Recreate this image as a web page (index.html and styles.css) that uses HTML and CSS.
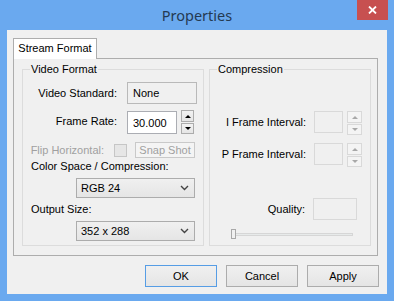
FILE: index.html
```html
<!DOCTYPE html>
<html lang="en">
<head>
    <meta charset="UTF-8">
    <title>Properties</title>
    <link rel="stylesheet" href="styles.css">
</head>
<body>
    <div class="window">
        <div class="titlebar">
            <span></span>
            <span class="title">Properties</span>
            <button class="close" type="button">
                <svg width="9" height="8" viewBox="0 0 9 8"><path d="M1 0.5L8 7.5M8 0.5L1 7.5" stroke="#fff" stroke-width="1.8"/></svg>
            </button>
        </div>
        <div class="client">
            <div class="tabs">
                <div class="tab active">Stream Format</div>
            </div>
            <div class="page">
                <!-- Video Format -->
                <fieldset class="group video">
                    <legend>Video Format</legend>
                    <div class="row std">
                        <label>Video Standard:</label>
                        <div class="field readonly">None</div>
                    </div>
                    <div class="row rate">
                        <label>Frame Rate:</label>
                        <input class="field" type="text" value="30.000">
                        <div class="spin">
                            <span class="spin-btn up"></span>
                            <span class="spin-btn down"></span>
                        </div>
                    </div>
                    <div class="row flip disabled">
                        <label>Flip Horizontal:</label>
                        <span class="check"></span>
                        <button class="btn snap" type="button" disabled>Snap Shot</button>
                    </div>
                    <div class="caption">Color Space / Compression:</div>
                    <div class="select">
                        <span>RGB 24</span>
                        <svg width="9" height="6" viewBox="0 0 9 6"><path d="M1 1L4.5 4.5L8 1" stroke="#444" stroke-width="1.4" fill="none"/></svg>
                    </div>
                    <div class="caption">Output Size:</div>
                    <div class="select">
                        <span>352 x 288</span>
                        <svg width="9" height="6" viewBox="0 0 9 6"><path d="M1 1L4.5 4.5L8 1" stroke="#444" stroke-width="1.4" fill="none"/></svg>
                    </div>
                </fieldset>

                <!-- Compression -->
                <fieldset class="group comp">
                    <legend>Compression</legend>
                    <div class="row iframe">
                        <label>I Frame Interval:</label>
                        <div class="field off"></div>
                        <div class="spin off">
                            <span class="spin-btn up"></span>
                            <span class="spin-btn down"></span>
                        </div>
                    </div>
                    <div class="row pframe">
                        <label>P Frame Interval:</label>
                        <div class="field off"></div>
                        <div class="spin off">
                            <span class="spin-btn up"></span>
                            <span class="spin-btn down"></span>
                        </div>
                    </div>
                    <div class="row quality">
                        <label>Quality:</label>
                        <div class="field off wide"></div>
                    </div>
                    <div class="slider">
                        <span class="thumb"></span>
                        <span class="track"></span>
                    </div>
                </fieldset>
            </div>
            <div class="actions">
                <button class="btn default" type="button">OK</button>
                <button class="btn" type="button">Cancel</button>
                <button class="btn" type="button">Apply</button>
            </div>
        </div>
    </div>
</body>
</html>
```

FILE: styles.css
```css
body {
    margin: 0;
    padding: 0;
    font-family: "Liberation Sans", Arial, sans-serif;
    font-size: 11px;
    color: #000;
}
.window {
    width: 394px;
    height: 301px;
    background-color: #6aa9ef;
    box-sizing: border-box;
    padding: 0 7px 7px 7px;
}
.titlebar {
    height: 30px;
    display: grid;
    grid-template-columns: 1fr auto 1fr;
}
.title {
    font-family: "Noto Sans", sans-serif;
    font-size: 14.5px;
    line-height: 30px;
    color: #243a52;
}
.close {
    justify-self: end;
    align-self: start;
    width: 31px;
    height: 20px;
    margin-right: -1px;
    padding: 0;
    border: none;
    background-color: #c75050;
    display: flex;
    align-items: center;
    justify-content: center;
}
.client {
    height: 264px;
    background-color: #f0f0f0;
    padding: 8px 9px 0 6px;
    box-sizing: border-box;
}
.tabs {
    display: flex;
    height: 20px;
}
.tab {
    width: 84px;
    height: 21px;
    box-sizing: border-box;
    border: 1px solid #adadad;
    border-bottom: none;
    background-color: #fff;
    text-align: center;
    line-height: 19px;
    position: relative;
    z-index: 1;
}
.page {
    height: 198px;
    box-sizing: border-box;
    border: 1px solid #adadad;
    background-color: #f0f0f0;
    padding: 3px 7px 0 8px;
    display: grid;
    grid-template-columns: 182px 162px;
    column-gap: 5px;
    align-items: start;
}
.group {
    margin: 0;
    padding: 0;
    border: 1px solid #dcdcdc;
    min-width: 0;
    height: 184px;
    box-sizing: border-box;
}
.group legend {
    margin-left: 7px;
    padding: 0 1px;
    line-height: 14px;
}
.row {
    display: flex;
    align-items: flex-start;
}
.row label {
    text-align: right;
    flex: none;
}
.std {
    margin-top: 6px;
    align-items: center;
}
.std label, .rate label {
    width: 94px;
    margin-right: 10px;
}
.rate {
    margin-top: 6px;
}
.rate label {
    line-height: 23px;
}
.field {
    box-sizing: border-box;
    height: 22px;
    border: 1px solid #abadb3;
    background-color: #fff;
    font: inherit;
    padding: 0 5px;
    line-height: 20px;
    margin: 0;
}
.std .field {
    width: 70px;
    background-color: #f0f0f0;
    border-color: #b9b9b9;
}
.rate .field {
    width: 50px;
    height: 23px;
    margin-top: 1px;
    outline: none;
}
.spin {
    margin-left: 4px;
    display: flex;
    flex-direction: column;
    gap: 1px;
}
.spin-btn {
    display: flex;
    align-items: center;
    justify-content: center;
    width: 13px;
    height: 12px;
    box-sizing: border-box;
    border: 1px solid #acacac;
    background: linear-gradient(#f2f2f2, #e5e5e5);
}
.spin-btn.down {
    height: 11px;
}
.spin-btn::after {
    content: "";
    border-left: 3px solid transparent;
    border-right: 3px solid transparent;
}
.spin-btn.up::after {
    border-bottom: 3px solid #000;
}
.spin-btn.down::after {
    border-top: 3px solid #000;
}
.spin.off .spin-btn {
    width: 15px;
    border-color: #d9d9d9;
    background: #f4f4f4;
}
.spin.off .spin-btn.up::after {
    border-bottom-color: #a8a8a8;
}
.spin.off .spin-btn.down::after {
    border-top-color: #a8a8a8;
}
.flip {
    margin-top: 8px;
    height: 16px;
    align-items: center;
    color: #a0a0a0;
}
.flip label {
    width: 81px;
    margin-right: 10px;
}
.check {
    width: 13px;
    height: 13px;
    box-sizing: border-box;
    border: 1px solid #c6c6c6;
    background-color: #e6e6e6;
    margin-right: 8px;
}
.btn {
    font: inherit;
    color: #000;
    box-sizing: border-box;
    border: 1px solid #acacac;
    background: linear-gradient(#f0f0f0, #e5e5e5);
    padding: 0;
    margin: 0;
}
.btn.snap {
    width: 60px;
    height: 16px;
    color: #a0a0a0;
    background: #f4f4f4;
    border-color: #c9c9c9;
    line-height: 14px;
}
.caption {
    margin: 1px 0 0 8px;
    line-height: 15px;
}
.select {
    margin: 4px 0 4px 53px;
    width: 119px;
    height: 20px;
    box-sizing: border-box;
    border: 1px solid #acacac;
    background: linear-gradient(#f0f0f0, #e5e5e5);
    display: flex;
    align-items: center;
    justify-content: space-between;
    padding: 0 5px 0 4px;
}
.comp .row label {
    width: 96px;
    margin-right: 8px;
    line-height: 22px;
}
.field.off {
    width: 29px;
    background-color: #f0f0f0;
    border-color: #d9d9d9;
}
.field.off.wide {
    width: 44px;
}
.iframe {
    margin-top: 35px;
}
.pframe {
    margin-top: 8px;
}
.quality {
    margin-top: 31px;
}
.quality label {
    width: 95px !important;
}
.spin.off {
    margin-left: 4px;
}
.slider {
    margin: 9px 0 0 21px;
    width: 122px;
    height: 10px;
    display: flex;
    align-items: center;
    position: relative;
}
.track {
    flex: 1;
    height: 3px;
    box-sizing: border-box;
    border: 1px solid #d6d6d6;
    background-color: #e7eaea;
}
.thumb {
    position: absolute;
    left: 0;
    top: 0;
    width: 5px;
    height: 10px;
    box-sizing: border-box;
    border: 1px solid #a8a8a8;
    background-color: #f0f0f0;
}
.actions {
    display: flex;
    justify-content: flex-end;
    gap: 9px;
    margin-top: 9px;
    margin-right: -1px;
}
.actions .btn {
    width: 72px;
    height: 22px;
}
.btn.default {
    border-color: #569de5;
}
```
